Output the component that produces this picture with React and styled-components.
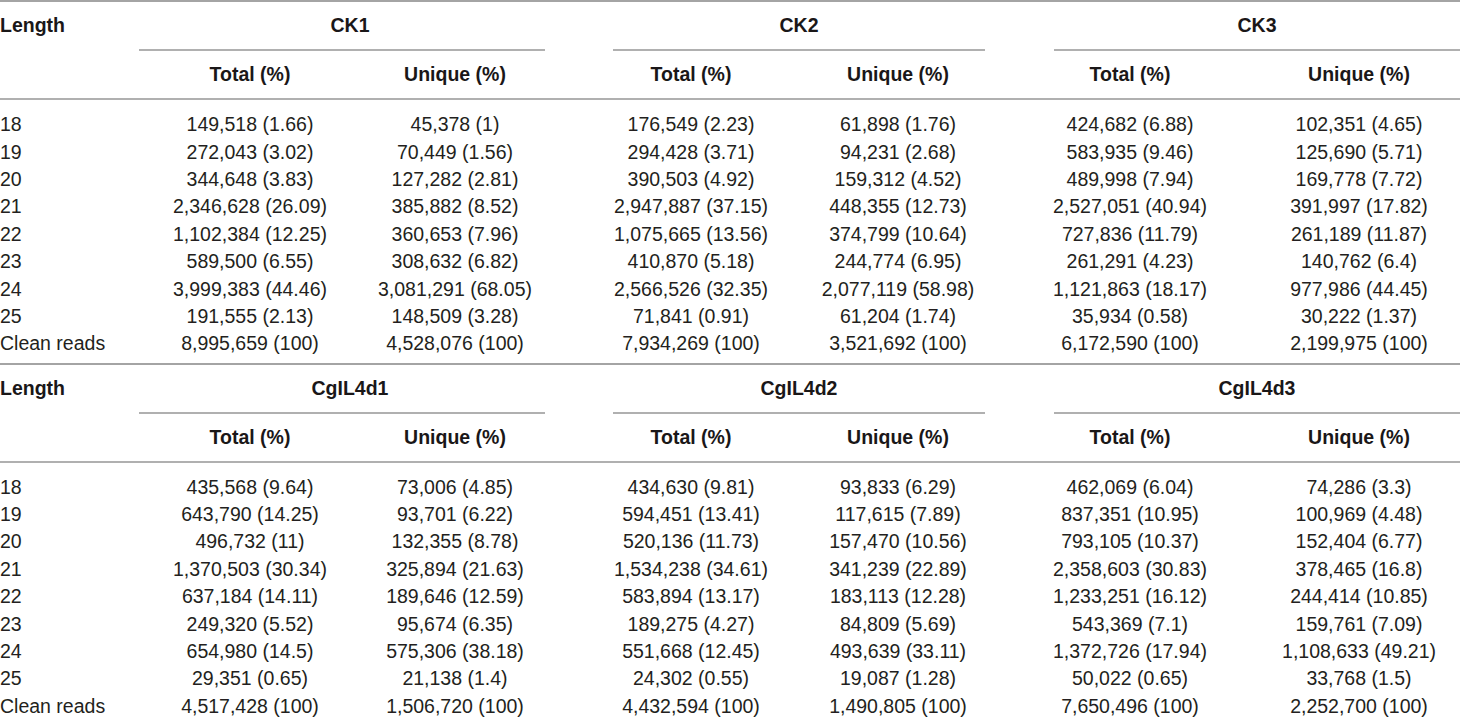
import React from "react";
import styled, { createGlobalStyle, css } from "styled-components";

const GlobalStyle = createGlobalStyle`
  html, body {
    margin: 0;
    padding: 0;
    background: #ffffff;
  }
  body {
    font-family: "Liberation Sans", Arial, Helvetica, sans-serif;
    color: #231f20;
  }
`;

// shared column layout for every row of the table
const columns = css`
  display: grid;
  grid-template-columns: 140px 220px 190px 282px 132px 332px 126px;
  padding-right: 38px;
`;

const Page = styled.div`
  width: 1460px;
  overflow: hidden;
`;

const TableBlock = styled.section`
  border-top: 2px solid #a4a4a4;
`;

const HeadRow = styled.div`
  ${columns};
  font-size: 19.5px;
  font-weight: 700;
  color: #1a1718;
  ${props =>
    props.$ruled &&
    css`
      border-bottom: 2px solid #b0b0b0;
    `}
`;

const Corner = styled.div`
  height: 47px;
  display: flex;
  align-items: center;
`;

const GroupLabel = styled.div`
  grid-column: span 2;
  height: 47px;
  display: flex;
  align-items: center;
  justify-content: center;
  border-bottom: 2px solid #b0b0b0;
  margin-left: ${props => props.$ml}px;
  margin-right: ${props => props.$mr}px;
  padding-left: ${props => props.$nudge || 0}px;
`;

const SubHead = styled.div`
  height: 47px;
  display: flex;
  align-items: center;
  justify-content: center;
  white-space: nowrap;
`;

const Body = styled.div`
  padding: 11px 0 5px;
`;

const Row = styled.div`
  ${columns};
  height: 27.4px;
  font-size: 19.5px;
  align-items: center;
`;

const RowLabel = styled.div`
  white-space: nowrap;
`;

const Cell = styled.div`
  display: flex;
  justify-content: center;
  white-space: nowrap;
`;

const groupPlacement = [
  { ml: -1, mr: 5, nudge: 16 },
  { ml: 63, mr: -21, nudge: 0 },
  { ml: 90, mr: -38, nudge: -18 }
];

const tables = [
  {
    groups: ["CK1", "CK2", "CK3"],
    rows: [
      ["18", "149,518 (1.66)", "45,378 (1)", "176,549 (2.23)", "61,898 (1.76)", "424,682 (6.88)", "102,351 (4.65)"],
      ["19", "272,043 (3.02)", "70,449 (1.56)", "294,428 (3.71)", "94,231 (2.68)", "583,935 (9.46)", "125,690 (5.71)"],
      ["20", "344,648 (3.83)", "127,282 (2.81)", "390,503 (4.92)", "159,312 (4.52)", "489,998 (7.94)", "169,778 (7.72)"],
      ["21", "2,346,628 (26.09)", "385,882 (8.52)", "2,947,887 (37.15)", "448,355 (12.73)", "2,527,051 (40.94)", "391,997 (17.82)"],
      ["22", "1,102,384 (12.25)", "360,653 (7.96)", "1,075,665 (13.56)", "374,799 (10.64)", "727,836 (11.79)", "261,189 (11.87)"],
      ["23", "589,500 (6.55)", "308,632 (6.82)", "410,870 (5.18)", "244,774 (6.95)", "261,291 (4.23)", "140,762 (6.4)"],
      ["24", "3,999,383 (44.46)", "3,081,291 (68.05)", "2,566,526 (32.35)", "2,077,119 (58.98)", "1,121,863 (18.17)", "977,986 (44.45)"],
      ["25", "191,555 (2.13)", "148,509 (3.28)", "71,841 (0.91)", "61,204 (1.74)", "35,934 (0.58)", "30,222 (1.37)"],
      ["Clean reads", "8,995,659 (100)", "4,528,076 (100)", "7,934,269 (100)", "3,521,692 (100)", "6,172,590 (100)", "2,199,975 (100)"]
    ]
  },
  {
    groups: ["CgIL4d1", "CgIL4d2", "CgIL4d3"],
    rows: [
      ["18", "435,568 (9.64)", "73,006 (4.85)", "434,630 (9.81)", "93,833 (6.29)", "462,069 (6.04)", "74,286 (3.3)"],
      ["19", "643,790 (14.25)", "93,701 (6.22)", "594,451 (13.41)", "117,615 (7.89)", "837,351 (10.95)", "100,969 (4.48)"],
      ["20", "496,732 (11)", "132,355 (8.78)", "520,136 (11.73)", "157,470 (10.56)", "793,105 (10.37)", "152,404 (6.77)"],
      ["21", "1,370,503 (30.34)", "325,894 (21.63)", "1,534,238 (34.61)", "341,239 (22.89)", "2,358,603 (30.83)", "378,465 (16.8)"],
      ["22", "637,184 (14.11)", "189,646 (12.59)", "583,894 (13.17)", "183,113 (12.28)", "1,233,251 (16.12)", "244,414 (10.85)"],
      ["23", "249,320 (5.52)", "95,674 (6.35)", "189,275 (4.27)", "84,809 (5.69)", "543,369 (7.1)", "159,761 (7.09)"],
      ["24", "654,980 (14.5)", "575,306 (38.18)", "551,668 (12.45)", "493,639 (33.11)", "1,372,726 (17.94)", "1,108,633 (49.21)"],
      ["25", "29,351 (0.65)", "21,138 (1.4)", "24,302 (0.55)", "19,087 (1.28)", "50,022 (0.65)", "33,768 (1.5)"],
      ["Clean reads", "4,517,428 (100)", "1,506,720 (100)", "4,432,594 (100)", "1,490,805 (100)", "7,650,496 (100)", "2,252,700 (100)"]
    ]
  }
];

function ReadsTable({ groups, rows }) {
  return (
    <TableBlock>
      <HeadRow>
        <Corner>Length</Corner>
        {groups.map((g, i) => (
          <GroupLabel
            key={g}
            $ml={groupPlacement[i].ml}
            $mr={groupPlacement[i].mr}
            $nudge={groupPlacement[i].nudge}
          >
            {g}
          </GroupLabel>
        ))}
      </HeadRow>
      <HeadRow $ruled>
        <SubHead />
        {groups.map(g => (
          <React.Fragment key={g}>
            <SubHead>Total (%)</SubHead>
            <SubHead>Unique (%)</SubHead>
          </React.Fragment>
        ))}
      </HeadRow>
      <Body>
        {rows.map(([label, ...values]) => (
          <Row key={label}>
            <RowLabel>{label}</RowLabel>
            {values.map((v, i) => (
              <Cell key={i}>{v}</Cell>
            ))}
          </Row>
        ))}
      </Body>
    </TableBlock>
  );
}

export default function App() {
  return (
    <Page>
      <GlobalStyle />
      {tables.map((t, i) => (
        <ReadsTable key={i} groups={t.groups} rows={t.rows} />
      ))}
    </Page>
  );
}
